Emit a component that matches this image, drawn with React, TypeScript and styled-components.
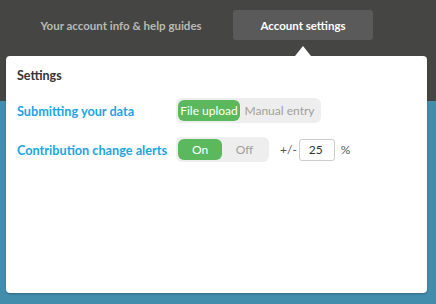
import React, {useState} from 'react';
import styled, {createGlobalStyle} from 'styled-components';

const GlobalStyle = createGlobalStyle`
  html, body {
    margin: 0;
    padding: 0;
  }
  body {
    font-family: Lato, "Open Sans", sans-serif;
  }
`;

const Page = styled.div`
  width: 436px;
  height: 304px;
  box-sizing: border-box;
  display: flex;
  flex-direction: column;
  padding: 10px 9px 11px 6px;
  background: linear-gradient(#454543 0, #454543 101px, #428cac 101px);
`;

const Nav = styled.nav`
  display: flex;
  gap: 14px;
  height: 30px;
  padding-left: 17px;
  margin-bottom: 16px;
`;

interface TabProps {
  active?: boolean;
  width: number;
}

const Tab = styled.div<TabProps>`
  position: relative;
  width: ${({width}) => width}px;
  display: flex;
  align-items: center;
  justify-content: center;
  border-radius: 3px;
  font-size: 11.5px;
  font-weight: 700;
  color: ${({active}) => (active ? '#ffffff' : '#b9b9b4')};
  background: ${({active}) => (active ? '#5a5a5b' : 'transparent')};

  &::after {
    content: '';
    display: ${({active}) => (active ? 'block' : 'none')};
    position: absolute;
    left: 50%;
    top: calc(100% + 6px);
    margin-left: -8px;
    border-left: 8px solid transparent;
    border-right: 8px solid transparent;
    border-bottom: 10px solid #ffffff;
  }
`;

const Panel = styled.section`
  flex: 1;
  background: #ffffff;
  border-radius: 4px;
  box-shadow: 0 1px 2px rgba(0, 0, 0, 0.25);
  padding: 12px 11px;
`;

const Title = styled.h2`
  margin: 0 0 15px;
  font-size: 12.5px;
  font-weight: 700;
  color: #333333;
`;

const Grid = styled.div`
  display: grid;
  grid-template-columns: 159px auto;
  row-gap: 14px;
  align-items: center;
`;

const Label = styled.div`
  font-size: 12.7px;
  font-weight: 700;
  color: #1aa6df;
`;

const Controls = styled.div`
  display: flex;
  align-items: center;
`;

const Switch = styled.div`
  display: inline-flex;
  align-items: center;
  padding: 2px;
  border-radius: 6px;
  background: #eeeeee;
`;

interface OptionProps {
  selected: boolean;
  width: number;
}

const Option = styled.button<OptionProps>`
  width: ${({width}) => width}px;
  height: 21px;
  border: 0;
  border-radius: 6px;
  padding: 0;
  font-family: inherit;
  font-size: 12px;
  color: ${({selected}) => (selected ? '#ffffff' : '#a0a0a0')};
  background: ${({selected}) => (selected ? '#5cb85c' : 'transparent')};
  cursor: pointer;
`;

const PlusMinus = styled.span`
  margin-left: 11px;
  font-size: 12px;
  color: #555555;
`;

const NumberInput = styled.input`
  width: 36px;
  height: 22px;
  box-sizing: border-box;
  margin-left: 2px;
  padding: 0 0 0 9px;
  border: 1px solid #cccccc;
  border-radius: 3px;
  font-family: inherit;
  font-size: 12px;
  color: #333333;
`;

const Percent = styled.span`
  margin-left: 6px;
  font-size: 12px;
  color: #555555;
`;

const App: React.FC = () => {
  const [mode, setMode] = useState('file');
  const [alerts, setAlerts] = useState(true);
  const [threshold, setThreshold] = useState('25');

  return (
    <>
      <GlobalStyle />
      <Page>
        <Nav>
          <Tab width={196}>Your account info &amp; help guides</Tab>
          <Tab width={140} active>
            Account settings
          </Tab>
        </Nav>
        <Panel>
          <Title>Settings</Title>
          <Grid>
            <Label>Submitting your data</Label>
            <Controls>
              <Switch>
                <Option width={62} selected={mode === 'file'} onClick={() => setMode('file')}>
                  File upload
                </Option>
                <Option width={79} selected={mode === 'manual'} onClick={() => setMode('manual')}>
                  Manual entry
                </Option>
              </Switch>
            </Controls>
            <Label>Contribution change alerts</Label>
            <Controls>
              <Switch>
                <Option width={44} selected={alerts} onClick={() => setAlerts(true)}>
                  On
                </Option>
                <Option width={45} selected={!alerts} onClick={() => setAlerts(false)}>
                  Off
                </Option>
              </Switch>
              <PlusMinus>+/-</PlusMinus>
              <NumberInput value={threshold} onChange={(e) => setThreshold(e.target.value)} />
              <Percent>%</Percent>
            </Controls>
          </Grid>
        </Panel>
      </Page>
    </>
  );
};

export default App;
